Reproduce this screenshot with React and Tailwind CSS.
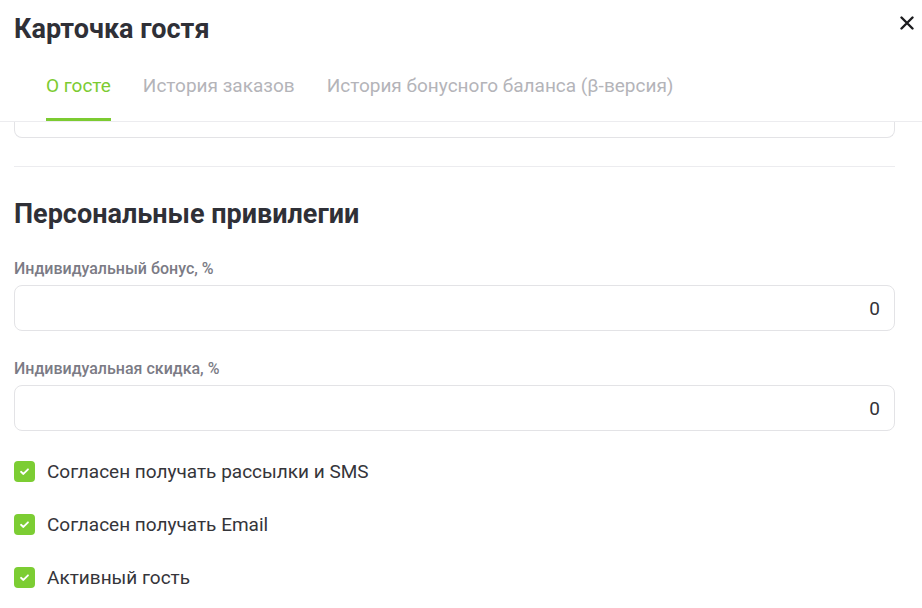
import { useState } from 'react';

const checks = [
  'Согласен получать рассылки и SMS',
  'Согласен получать Email',
  'Активный гость',
];

function CheckIcon() {
  return (
    <svg viewBox="0 0 12 12" className="w-[11px] h-[11px]" fill="none">
      <path d="M2.2 6.3 L4.8 8.7 L9.8 3.6" stroke="white" strokeWidth="2" strokeLinecap="round" strokeLinejoin="round" />
    </svg>
  );
}

export default function GuestCard() {
  const [tab, setTab] = useState(0);
  const [bonus, setBonus] = useState('0');
  const [discount, setDiscount] = useState('0');
  const [flags, setFlags] = useState([true, true, true]);

  const tabs = ['О госте', 'История заказов', 'История бонусного баланса (β-версия)'];

  return (
    <div className="relative w-full h-[608px] overflow-hidden bg-white font-['Roboto',sans-serif]">
      <header className="border-b border-[#ececef]">
        <h1 className="pl-[14px] pt-[13px] text-[27px] leading-[32px] font-bold text-[#2f3037]">Карточка гостя</h1>
        <nav className="flex gap-8 pl-[46px] mt-[29px]">
          {tabs.map((t, i) => (
            <button
              key={t}
              onClick={() => setTab(i)}
              className={`relative pb-[23px] text-[19px] leading-[24px] ${tab === i ? 'text-[#7ccb31]' : 'text-[#b4b4b9]'}`}
            >
              {t}
              {tab === i && <span className="absolute left-0 right-0 bottom-0 h-[3px] bg-[#7ccb31]"></span>}
            </button>
          ))}
        </nav>
      </header>

      <button className="absolute top-[16px] right-[8px] w-[14px] h-[14px] text-[#1c1c1f]">
        <svg viewBox="0 0 14 14" className="w-[14px] h-[14px]" fill="none">
          <path d="M1.5 1.5 L12.5 12.5 M12.5 1.5 L1.5 12.5" stroke="currentColor" strokeWidth="2.4" strokeLinecap="round" />
        </svg>
      </button>

      <div className="pl-[14px] pr-[27px]">
        {/* поле, прокрученное под шапку */}
        <div className="h-[16px] border-x border-b border-[#e3e3e6] rounded-b-[8px]"></div>

        <div className="mt-[28px] h-px bg-[#ececef]"></div>

        <h2 className="mt-[31px] text-[27px] leading-[32px] font-bold text-[#2f3037]">Персональные привилегии</h2>

        <label className="block mt-[29px] text-[16px] leading-[20px] font-medium text-[#7b7b85]">Индивидуальный бонус, %</label>
        <input
          value={bonus}
          onChange={e => setBonus(e.target.value)}
          className="mt-[6px] block w-full h-[46px] px-[14px] border border-[#e3e3e6] rounded-[8px] text-right text-[19px] text-[#333338] outline-none"
        />

        <label className="block mt-[28px] text-[16px] leading-[20px] font-medium text-[#7b7b85]">Индивидуальная скидка, %</label>
        <input
          value={discount}
          onChange={e => setDiscount(e.target.value)}
          className="mt-[6px] block w-full h-[46px] px-[14px] border border-[#e3e3e6] rounded-[8px] text-right text-[19px] text-[#333338] outline-none"
        />

        <div className="mt-[30px] flex flex-col gap-[32px]">
          {checks.map((c, i) => (
            <label key={c} className="flex items-center gap-[12px] h-[21px] cursor-pointer" onClick={() => setFlags(f => f.map((v, j) => j === i ? !v : v))}>
              <span className={`flex items-center justify-center w-[21px] h-[21px] rounded-[4px] ${flags[i] ? 'bg-[#7ccd33]' : 'border border-[#d0d0d5]'}`}>
                {flags[i] && <CheckIcon />}
              </span>
              <span className="text-[19px] leading-[24px] text-[#35353a]">{c}</span>
            </label>
          ))}
        </div>
      </div>
    </div>
  );
}
